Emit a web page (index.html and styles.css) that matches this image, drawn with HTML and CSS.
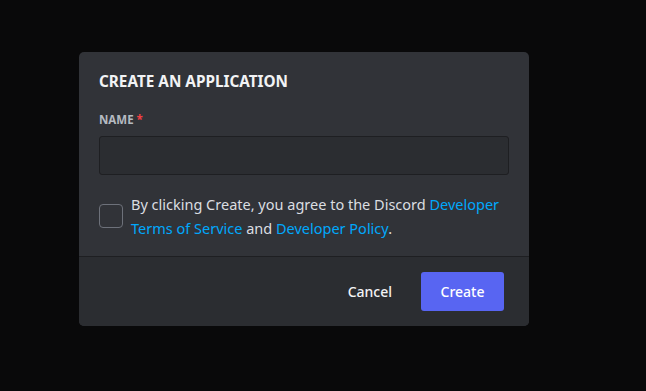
FILE: index.html
```html
<!DOCTYPE html>
<html>
<head>
<meta charset="utf-8">
<link rel="stylesheet" href="styles.css">
</head>
<body>
<div class="modal">
  <div class="modal-body">
    <h2 class="title">CREATE AN APPLICATION</h2>
    <label class="label">NAME<span class="req">*</span></label>
    <div class="input"></div>
    <div class="agree">
      <div class="checkbox"></div>
      <p class="agree-text">By clicking Create, you agree to the Discord <a class="link">Developer</a><br><a class="link">Terms of Service</a> and <a class="link">Developer Policy</a>.</p>
    </div>
  </div>
  <div class="modal-footer">
    <button class="btn btn-link">Cancel</button>
    <button class="btn btn-primary">Create</button>
  </div>
</div>
</body>
</html>
```
FILE: styles.css
```css
html, body {
  margin: 0;
  padding: 0;
  background: #09090a;
  height: 100%;
}
body {
  font-family: "Noto Sans", "Open Sans", sans-serif;
  padding: 52px 0 0 79px;
  box-sizing: border-box;
}
.modal {
  width: 450px;
  background: #313338;
  border-radius: 5px;
  overflow: hidden;
}
.modal-body {
  padding: 20px 20px 16px 20px;
  display: flex;
  flex-direction: column;
}
.title {
  margin: 0;
  font-size: 15.3px;
  line-height: 18px;
  font-weight: 700;
  color: #f2f3f5;
}
.label {
  margin-top: 22px;
  font-size: 11.5px;
  line-height: 16px;
  font-weight: 700;
  color: #b5bac1;
}
.req {
  color: #f23f42;
  margin-left: 3px;
}
.input {
  margin-top: 8px;
  height: 37px;
  background: #2b2d31;
  border: 1px solid #1e1f22;
  border-radius: 3px;
}
.agree {
  margin-top: 17px;
  display: flex;
  align-items: center;
  gap: 8px;
}
.checkbox {
  flex: none;
  width: 22px;
  height: 22px;
  border: 1px solid #6d717a;
  border-radius: 4px;
}
.agree-text {
  margin: 0;
  font-size: 14.5px;
  line-height: 24px;
  color: #dbdee1;
}
.link {
  color: #00a8fc;
}
.modal-footer {
  background: #2b2d31;
  border-top: 1px solid #1e1f22;
  padding: 15px 25px 15px 16px;
  display: flex;
  justify-content: flex-end;
  align-items: center;
  gap: 13px;
}
.btn {
  font-family: inherit;
  font-size: 14px;
  font-weight: 500;
  border: none;
  border-radius: 3px;
  height: 39px;
  cursor: pointer;
}
.btn-link {
  background: transparent;
  color: #f2f3f5;
  padding: 0 16px;
}
.btn-primary {
  background: #5865f2;
  color: #ffffff;
  width: 83px;
}
```
